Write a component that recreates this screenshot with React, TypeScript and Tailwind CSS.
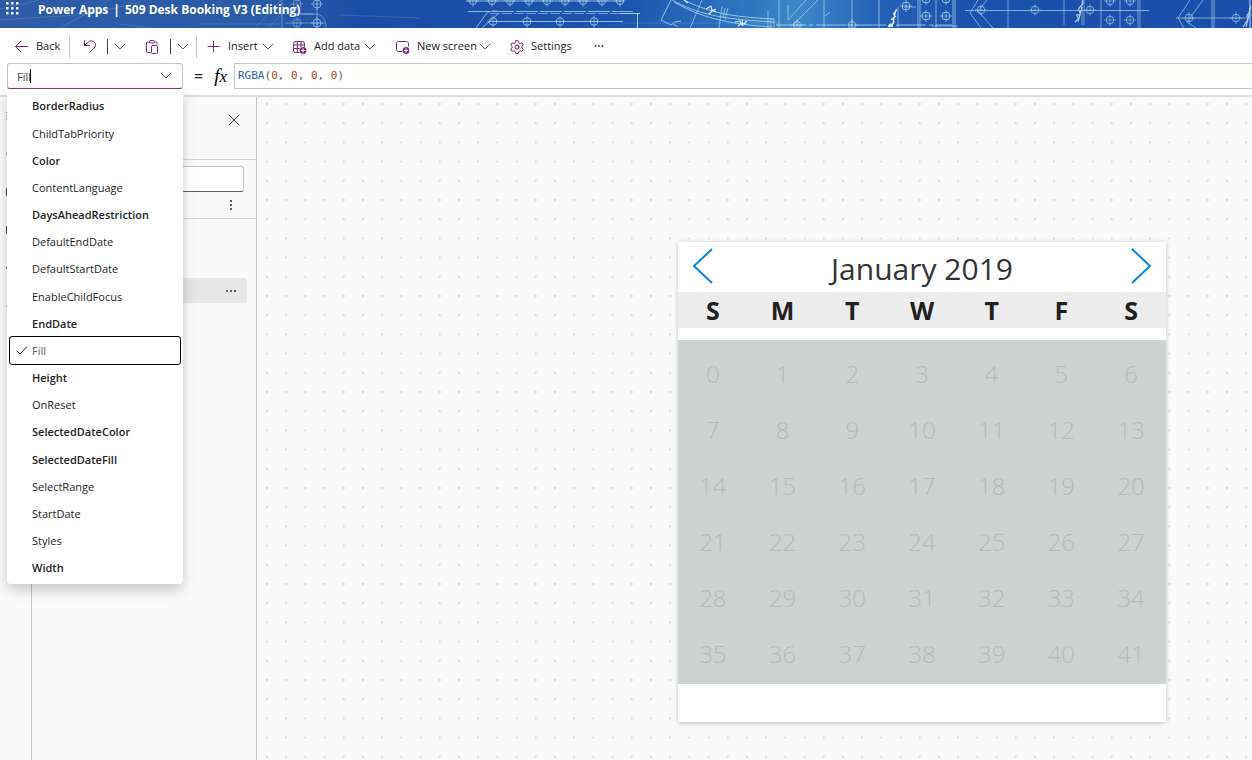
import type { ReactNode } from "react";

const PURPLE = "#742774";

const properties: { name: string; strong?: boolean }[] = [
  { name: "BorderRadius", strong: true },
  { name: "ChildTabPriority" },
  { name: "Color", strong: true },
  { name: "ContentLanguage" },
  { name: "DaysAheadRestriction", strong: true },
  { name: "DefaultEndDate" },
  { name: "DefaultStartDate" },
  { name: "EnableChildFocus" },
  { name: "EndDate", strong: true },
  { name: "Fill" },
  { name: "Height", strong: true },
  { name: "OnReset" },
  { name: "SelectedDateColor", strong: true },
  { name: "SelectedDateFill", strong: true },
  { name: "SelectRange" },
  { name: "StartDate" },
  { name: "Styles" },
  { name: "Width", strong: true },
];

const weekdays = ["S", "M", "T", "W", "T", "F", "S"];
const weeks = [0, 1, 2, 3, 4, 5].map((w) => weekdays.map((_, d) => w * 7 + d));

function Icon({ children, size = 16, color = PURPLE }: { children: ReactNode; size?: number; color?: string }) {
  return (
    <svg
      width={size}
      height={size}
      viewBox={`0 0 ${size} ${size}`}
      fill="none"
      stroke={color}
      strokeWidth="1"
      strokeLinecap="round"
      strokeLinejoin="round"
      className="shrink-0"
      aria-hidden="true"
    >
      {children}
    </svg>
  );
}

function Chevron({ color = "#616161" }: { color?: string }) {
  return (
    <svg width="12" height="12" viewBox="0 0 12 12" fill="none" stroke={color} strokeLinecap="round" className="shrink-0" aria-hidden="true">
      <path d="M1.2 3.2 6 8l4.800-4.800" />
    </svg>
  );
}

function Bolts({ y, xs, r = 3.2 }: { y: number; xs: number[]; r?: number }) {
  return (
    <g>
      {xs.map((x) => (
        <g key={x}>
          <circle cx={x} cy={y} r={r} />
          <path d={`M${x - 6} ${y}h12M${x} ${y - 6}v12`} strokeWidth="0.6" />
        </g>
      ))}
    </g>
  );
}

function Blueprint() {
  return (
    <svg
      className="absolute inset-0 h-full w-full"
      viewBox="0 0 1252 28"
      preserveAspectRatio="xMinYMin slice"
      fill="none"
      stroke="#b9dcef"
      strokeWidth="0.8"
      aria-hidden="true"
    >
      <defs>
        <linearGradient id="sky" x1="0" x2="1" y1="0" y2="0">
          <stop offset="0" stopColor="#2d5ba6" />
          <stop offset="0.22" stopColor="#2a5ba9" />
          <stop offset="0.29" stopColor="#1a4da6" />
          <stop offset="0.5" stopColor="#1c55ad" />
          <stop offset="0.6" stopColor="#2f78c0" />
          <stop offset="0.64" stopColor="#3d88c9" />
          <stop offset="0.7" stopColor="#2361b4" />
          <stop offset="0.77" stopColor="#1b52ac" />
          <stop offset="1" stopColor="#1a4fab" />
        </linearGradient>
      </defs>
      <rect width="1252" height="28" fill="url(#sky)" stroke="none" />
      <g opacity="0.3" strokeWidth="0.6">
        <path d="M0 20 90 14 140 2M60 28 110 0M118 24 150 28M255 28 281 0M268 28 292 3M0 9 40 0M340 15l80 3M620 23h160M200 24h80" />
      </g>
      <g opacity="0.55">
        <Bolts y={4} xs={[297]} r={4} />
        <Bolts y={23} xs={[297]} r={4} />
        <path d="M282 0v28M290 14h24c8 0 12 5 12 14M285 23h40" />
      </g>
      <g opacity="0.8">
        <Bolts y={4} xs={[317]} r={4} />
        <Bolts y={23} xs={[317]} r={4} />
        <path d="M317 0v28M300 14h14" strokeWidth="0.6" />
      </g>
      <g opacity="0.9">
        <Bolts y={1} xs={[473, 492, 510, 529, 547, 565, 583, 602, 620]} r={3.600} />
        <path d="M466 1h158" />
        <path d="M468 11.500h30l135 0" strokeDasharray="22 2" />
        <path d="M490 13.500h140" strokeDasharray="10 2" strokeWidth="0.6" />
        <Bolts y={21.5} xs={[493, 527, 560, 594]} r={3.8} />
        <path d="M476 28l10-14c3-3 7-3 11-3M482 28l16-14M493 21.500h130" />
        <path d="M620 13.500h20M637.500 14v14" strokeWidth="1" />
      </g>
      <g opacity="0.95">
        <path d="M671 0l-10 20 10 5 4-3 6-1M673 24l5 3M672 0c28 15 50 19 102 22M684 0c24 12 46 17 90 19M674 2c26 15 52 22 98 25" />
        <path d="M702 0l-12 28M722 6l-3 22M725 8l-2 10M728 8l-3 12M768 11v17M771 18v10M774 18v10M779 0v28M788 5v15M788 20l18-20M794 24l24-24M824 0v28M879 0v28" strokeWidth="0.7" />
        <path d="M706 9l5-3 1 5 4-2M709 14l4-4 3 2M684 0l4 3M735 22l5-1 2 4 5-4M738 26l4-3 4 1M742 20l1 6" stroke="#e8f6fd" strokeWidth="1.100" />
        <path d="M776 25h176" strokeDasharray="30 3 4 3" />
        <Bolts y={25} xs={[797, 852]} r={3.6} />
        <path d="M852 0v28M825 16l5-4M898 7v20M904 7h12" strokeWidth="0.7" />
        <path d="M888 27c2-4 5-4 2-1s5-2 4-5-5 0-1-3 3 0 1-3 4-3 2-6M892 27l4-17" stroke="#e4f4fb" strokeWidth="1.100" />
        <Bolts y={6} xs={[906]} r={4} />
        <Bolts y={16} xs={[926, 946]} r={4} />
        <Bolts y={-1} xs={[926, 946]} r={4} />
        <path d="M918 0v28M920 0v28M936 0v28M953 0v28M955 0v28M932 26h26" strokeWidth="0.7" />
      </g>
      <g opacity="0.8">
        <path d="M978 0l-8 13 11 15M987 0l-9 11 15 17M965 10.500h184" />
        <Bolts y={10} xs={[981, 1035, 1090]} r={3.800} />
        <path d="M1008 0v28M1064 0v25M1082 0v25M1084 0v25M1101 0v28M1120 0v28M1138 0v28M1140 0v28" strokeWidth="0.7" />
        <path d="M1075 22c3-3 4-3 2-6s4 1 3-3-3-3 1-7 1-4 2-6M1078 22l4-15" stroke="#dff1fa" strokeWidth="1.100" />
        <Bolts y={1} xs={[1110, 1130]} r={3.800} />
        <Bolts y={20} xs={[1110, 1130]} r={3.800} />
        <path d="M1190 0l-12 18 6 10M1203 0l-16 22 9 6M1212 0v28M1214 0v28M1176 18h70" />
        <Bolts y={18} xs={[1189, 1236]} r={3.800} />
        <path d="M1243 27c3-3 2-5 4-6s-2-5 1-7 0-5 3-8M1246 27l5-20M1250 0v28" stroke="#dff1fa" strokeWidth="1.100" />
      </g>
    </svg>
  );
}

function Header() {
  return (
    <header className="relative h-[28px] shrink-0 overflow-hidden">
      <Blueprint />
      <div className="relative flex h-[20px] items-center text-white">
        <button type="button" aria-label="App launcher" className="ml-[5px] w-[33px]">
          <svg width="14" height="16" viewBox="0 0 14 16" fill="#fff" className="block" aria-hidden="true">
            {[0, 5, 10].map((y) => [0, 5, 10].map((x) => <rect key={`${x}-${y}`} x={x + 1} y={y} width="2.500" height="2.500" rx="0.500" />))}
          </svg>
        </button>
        <h1 className="flex gap-[5px] text-[12px] leading-[18px] font-bold whitespace-nowrap">
          <span>Power Apps</span>
          <span>|</span>
          <span>509 Desk Booking V3 (Editing)</span>
        </h1>
      </div>
    </header>
  );
}

function Toolbar() {
  return (
    <div role="toolbar" aria-label="Commands" className="flex h-[35px] shrink-0 items-center bg-white pt-[2px] pl-[14px] text-[11px] text-[#242424]">
      <button type="button" className="flex w-[55px] items-center gap-[6px]">
        <Icon>
          <path d="M1.500 7.500h12.500M7 2 1.500 7.500 7 13" />
        </Icon>
        Back
      </button>
      <span className="h-[23px] w-px bg-[#c8c8c8]" />
      <button type="button" aria-label="Undo" className="ml-[12px] w-[25px]">
        <Icon>
          <path d="M2.500 1.500v5h5M2.500 6.500l3.500-3.300c2-1.900 4.600-1.700 6.200-.2 1.800 1.700 1.700 4.300 0 6L8 13.200" />
        </Icon>
      </button>
      <span className="h-[15px] w-px bg-[#424242]" />
      <button type="button" aria-label="Undo options" className="ml-[6px] w-[30px]">
        <Chevron />
      </button>
      <button type="button" aria-label="Paste" className="w-[26px]">
        <Icon>
          <path d="M5.500 3H3.500c-.6 0-1 .4-1 1v8.500c0 .6.400 1 1 1h2.500M10.500 3H12c.6 0 1 .4 1 1v1" />
          <rect x="5.500" y="1.500" width="5" height="2.500" rx="1" />
          <rect x="7.500" y="6.500" width="6" height="8" rx="1" />
        </Icon>
      </button>
      <span className="h-[15px] w-px bg-[#424242]" />
      <button type="button" aria-label="Paste options" className="ml-[6px] w-[19px]">
        <Chevron />
      </button>
      <span className="h-[23px] w-px bg-[#c8c8c8]" />
      <button type="button" className="ml-[9px] flex w-[86px] items-center">
        <Icon>
          <path d="M7.500 2v11M2 7.500h11" />
        </Icon>
        <span className="w-[40px] pl-[6px] text-left">Insert</span>
        <Chevron />
      </button>
      <button type="button" className="flex w-[103px] items-center">
        <Icon>
          <rect x="1.500" y="2.500" width="11" height="11" rx="2" />
          <path d="M1.500 6h11M1.500 9.500h7M5.300 2.500v11M9 2.500v6" />
          <circle cx="11" cy="11.500" r="3.800" fill={PURPLE} stroke="#fff" strokeWidth="0.6" />
          <path d="M11 9.700v3.600M9.200 11.500h3.600" stroke="#fff" />
        </Icon>
        <span className="w-[56px] pl-[6px] text-left whitespace-nowrap">Add data</span>
        <Chevron />
      </button>
      <button type="button" className="flex w-[114px] items-center">
        <Icon>
          <path d="M7 12.500H3.500c-1.100 0-2-.900-2-2v-6c0-1.100.900-2 2-2h8c1.100 0 2 .9 2 2V7" />
          <circle cx="11" cy="11.500" r="3.800" fill={PURPLE} stroke="#fff" strokeWidth="0.6" />
          <path d="M11 9.700v3.600M9.200 11.500h3.600" stroke="#fff" />
        </Icon>
        <span className="w-[68px] pl-[6px] text-left whitespace-nowrap">New screen</span>
        <Chevron />
      </button>
      <button type="button" className="flex w-[84px] items-center gap-[6px]">
        <Icon>
          <path d="M6.700 1.800h2.600l.5 1.900 1.300.7 1.900-.5 1.300 2.200-1.400 1.300v1.400l1.400 1.300-1.300 2.200-1.900-.5-1.300.7-.5 1.900H6.700l-.5-1.900-1.300-.7-1.900.5-1.300-2.200 1.400-1.300V7.400L1.700 6.100 3 3.900l1.900.5 1.300-.7z" />
          <circle cx="8" cy="8.100" r="2" />
        </Icon>
        Settings
      </button>
      <button type="button" aria-label="More commands">
        <svg width="12" height="12" viewBox="0 0 12 12" fill="#5c2e5c" className="block" aria-hidden="true">
          <circle cx="2.500" cy="5" r="0.900" />
          <circle cx="6" cy="5" r="0.900" />
          <circle cx="9.500" cy="5" r="0.900" />
        </svg>
      </button>
    </div>
  );
}

function PropertyMenu() {
  return (
    <ul
      id="properties"
      role="listbox"
      aria-label="Properties"
      className="absolute top-full left-0 z-20 flex h-[495px] w-full flex-col rounded-b-[4px] bg-white px-[3px] py-[3px] text-[11px] text-[#242424] shadow-[0_6px_14px_rgba(0,0,0,0.2)]"
    >
      {properties.map(({ name, strong }) => {
        const selected = name === "Fill";
        return (
          <li
            key={name}
            role="option"
            aria-selected={selected}
            className={
              selected
                ? "flex flex-1 items-center rounded-[2px] pt-[2px] pl-[6px] text-[#616161] outline outline-black"
                : strong
                  ? "flex flex-1 items-center pt-[2px] pl-[22px] font-semibold"
                  : "flex flex-1 items-center pt-[2px] pl-[22px]"
            }
          >
            {selected && (
              <span className="w-[16px]">
                <svg width="12" height="12" viewBox="0 0 12 12" fill="none" stroke="#242424" strokeLinecap="round" aria-hidden="true">
                  <path d="M1 6 4 9 10.500 2" />
                </svg>
              </span>
            )}
            {name}
          </li>
        );
      })}
    </ul>
  );
}

function FormulaBar() {
  return (
    <div className="flex shrink-0 items-start border-b-2 border-[#dedede] bg-white pb-[6px] pl-[7px]">
      <div className="relative w-[176px]">
        <div className="flex h-[26px] items-center rounded-[3px] border border-[#c4c4c4] border-b-[#8a3a8a] pr-[10px] pl-[9px]">
          <input
            aria-label="Property"
            role="combobox"
            aria-expanded="true"
            aria-controls="properties"
            defaultValue="Fill"
            className="min-w-0 flex-1 bg-transparent pt-[2px] text-[11px] text-[#424242] outline-none"
          />
          <span className="absolute top-[6px] left-[23px] h-[14px] w-px bg-black" />
          <Chevron />
        </div>
        <PropertyMenu />
      </div>
      <div className="flex h-[26px] w-[51px] items-center justify-between pr-[7px] pl-[11px] text-[#242424]">
        <span className="text-[16px]">=</span>
        <span className="font-['Liberation_Serif',serif] text-[19px] leading-[24px] text-black italic">
          f<span className="text-[17px]">x</span>
        </span>
      </div>
      <div
        role="textbox"
        aria-label="Formula"
        contentEditable
        suppressContentEditableWarning
        className="h-[26px] flex-1 border border-r-0 border-[#c4c4c4] bg-[#fffffe] pl-[3px] font-['DejaVu_Sans_Mono',monospace] text-[11px] leading-[24px] whitespace-pre text-[#555] outline-none"
      >
        <span className="text-[#2b62ad]">RGBA</span>(<span className="text-[#b5481c]">0</span>, <span className="text-[#b5481c]">0</span>,{" "}
        <span className="text-[#b5481c]">0</span>, <span className="text-[#b5481c]">0</span>)
      </div>
    </div>
  );
}

const railIcons: { label: string; color: string; drawing: ReactNode }[] = [
  { label: "Tree view", color: "#b146c2", drawing: <path d="M10 2 .500 6.500 10 11l9.500-4.500zM.5 10 10 14.500 19.500 10M.5 13 10 18l9.500-5" /> },
  { label: "Insert", color: "#424242", drawing: <path d="M10 .5v19M.5 10h19" /> },
  { label: "Data", color: "#424242", drawing: <path d="M.5 6.500C.5 3 19.500 3 19.500 6.500v7c0 3.500-19 3.500-19 0z" /> },
  { label: "Media", color: "#424242", drawing: <path d="M2 4h16v12H2zM.500 6.500v7" /> },
  { label: "Power Automate", color: "#424242", drawing: <path d="M.5 9.500 6 3h8l5 7-5 7H6z" /> },
  { label: "Variables", color: "#9e9e9e", drawing: <path d="M.500 10h5l9-5M5.500 10l9 5" /> },
];

function Sidebar() {
  return (
    <>
      <nav aria-label="App authoring" className="flex w-[32px] shrink-0 flex-col border-r border-[#c8c8c8] bg-[#fafafa]">
        {railIcons.map(({ label, color, drawing }) => (
          <button key={label} type="button" aria-label={label} className="flex h-[38px] items-center justify-center">
            <Icon size={20} color={color}>
              {drawing}
            </Icon>
          </button>
        ))}
      </nav>
      <aside aria-label="Tree view" className="flex w-[225px] shrink-0 flex-col border-r border-[#c4c4c4] bg-[#fafafa] shadow-[1px_0_0_#e8e8e8]">
        <div className="flex h-[63px] items-start justify-end border-b border-[#d6d6d6] pt-[17px] pr-[16px]">
          <button type="button" aria-label="Close">
            <Icon size={12} color="#424242">
              <path d="M1 1l10 10M11 1 1 11" />
            </Icon>
          </button>
        </div>
        <div className="flex flex-col border-b border-[#d6d6d6] px-[12px] pt-[6px] pb-[5px]">
          <input aria-label="Search" className="h-[26px] rounded-[3px] border border-[#c4c4c4] border-b-[#616161] bg-white px-2 text-[11px] outline-none" />
          <button type="button" aria-label="Screen options" className="mt-[5px] mr-[5px] self-end">
            <svg width="16" height="16" viewBox="0 0 16 16" fill="#616161" className="block" aria-hidden="true">
              <rect x="7" y="3" width="2" height="2" />
              <rect x="7" y="7" width="2" height="2" />
              <rect x="7" y="11" width="2" height="2" />
            </svg>
          </button>
        </div>
        <div className="mt-[59px] mr-[9px] flex h-[25px] items-center justify-end rounded-[3px] bg-[#e6e6e6] pr-[8px]">
          <button type="button" aria-label="Item options">
            <svg width="16" height="16" viewBox="0 0 16 16" fill="#616161" className="block" aria-hidden="true">
              <rect x="3" y="7" width="2" height="2" />
              <rect x="7" y="7" width="2" height="2" />
              <rect x="11" y="7" width="2" height="2" />
            </svg>
          </button>
        </div>
      </aside>
    </>
  );
}

function CalendarArrow({ label, path }: { label: string; path: string }) {
  return (
    <button type="button" aria-label={label}>
      <svg width="24" height="40" viewBox="0 0 24 40" fill="none" stroke="#0a85d1" strokeWidth="2" className="block" aria-hidden="true">
        <path d={path} />
      </svg>
    </button>
  );
}

function Calendar() {
  return (
    <section
      aria-label="Calendar"
      className="absolute top-[145px] left-[421px] w-[488px] bg-white pb-[38px] font-['Open_Sans',sans-serif] shadow-[0_1px_5px_rgba(0,0,0,0.22)]"
    >
      <div className="flex h-[50px] items-start justify-between px-[13px] pt-[4px]">
        <CalendarArrow label="Previous month" path="M21 3 3 20l18 17" />
        <h2 className="pt-[2px] text-[30px] leading-[42px] text-[#333]">January 2019</h2>
        <CalendarArrow label="Next month" path="M3 3l18 17L3 37" />
      </div>
      <table className="w-full table-fixed border-collapse text-center">
        <thead className="bg-[#ececec] text-[25px] leading-[36px] text-[#212121]">
          <tr>
            {weekdays.map((d, i) => (
              <th key={i} className="h-[36px] p-0 font-bold">
                {d}
              </th>
            ))}
          </tr>
        </thead>
        <tbody className="text-[24px] leading-[56px] font-light text-[#bababa]">
          <tr>
            <td colSpan={7} className="h-[12px] bg-white p-0" />
          </tr>
          <tr className="bg-[#ced2d0]">
            <td colSpan={7} className="h-[6px] p-0" />
          </tr>
          {weeks.map((week) => (
            <tr key={week[0]} className="bg-[#ced2d0]">
              {week.map((day) => (
                <td key={day} className="h-[56px] p-0">
                  {day}
                </td>
              ))}
            </tr>
          ))}
          <tr className="bg-[#ced2d0]">
            <td colSpan={7} className="h-[2px] p-0" />
          </tr>
        </tbody>
      </table>
    </section>
  );
}

function Canvas() {
  return (
    <main className="relative flex-1 overflow-hidden bg-[#fafafa]">
      <svg className="absolute inset-0 h-full w-full" aria-hidden="true">
        <defs>
          <pattern id="dots" x="9" y="6" width="19.200" height="19.200" patternUnits="userSpaceOnUse">
            <rect width="2" height="2" fill="#dcdcdc" />
          </pattern>
        </defs>
        <rect width="100%" height="100%" fill="url(#dots)" />
      </svg>
      <Calendar />
    </main>
  );
}

export default function App() {
  return (
    <div className="flex h-screen flex-col overflow-hidden bg-[#fafafa] font-['Open_Sans','Noto_Sans',sans-serif]">
      <Header />
      <Toolbar />
      <FormulaBar />
      <div className="flex min-h-0 flex-1">
        <Sidebar />
        <Canvas />
      </div>
    </div>
  );
}
